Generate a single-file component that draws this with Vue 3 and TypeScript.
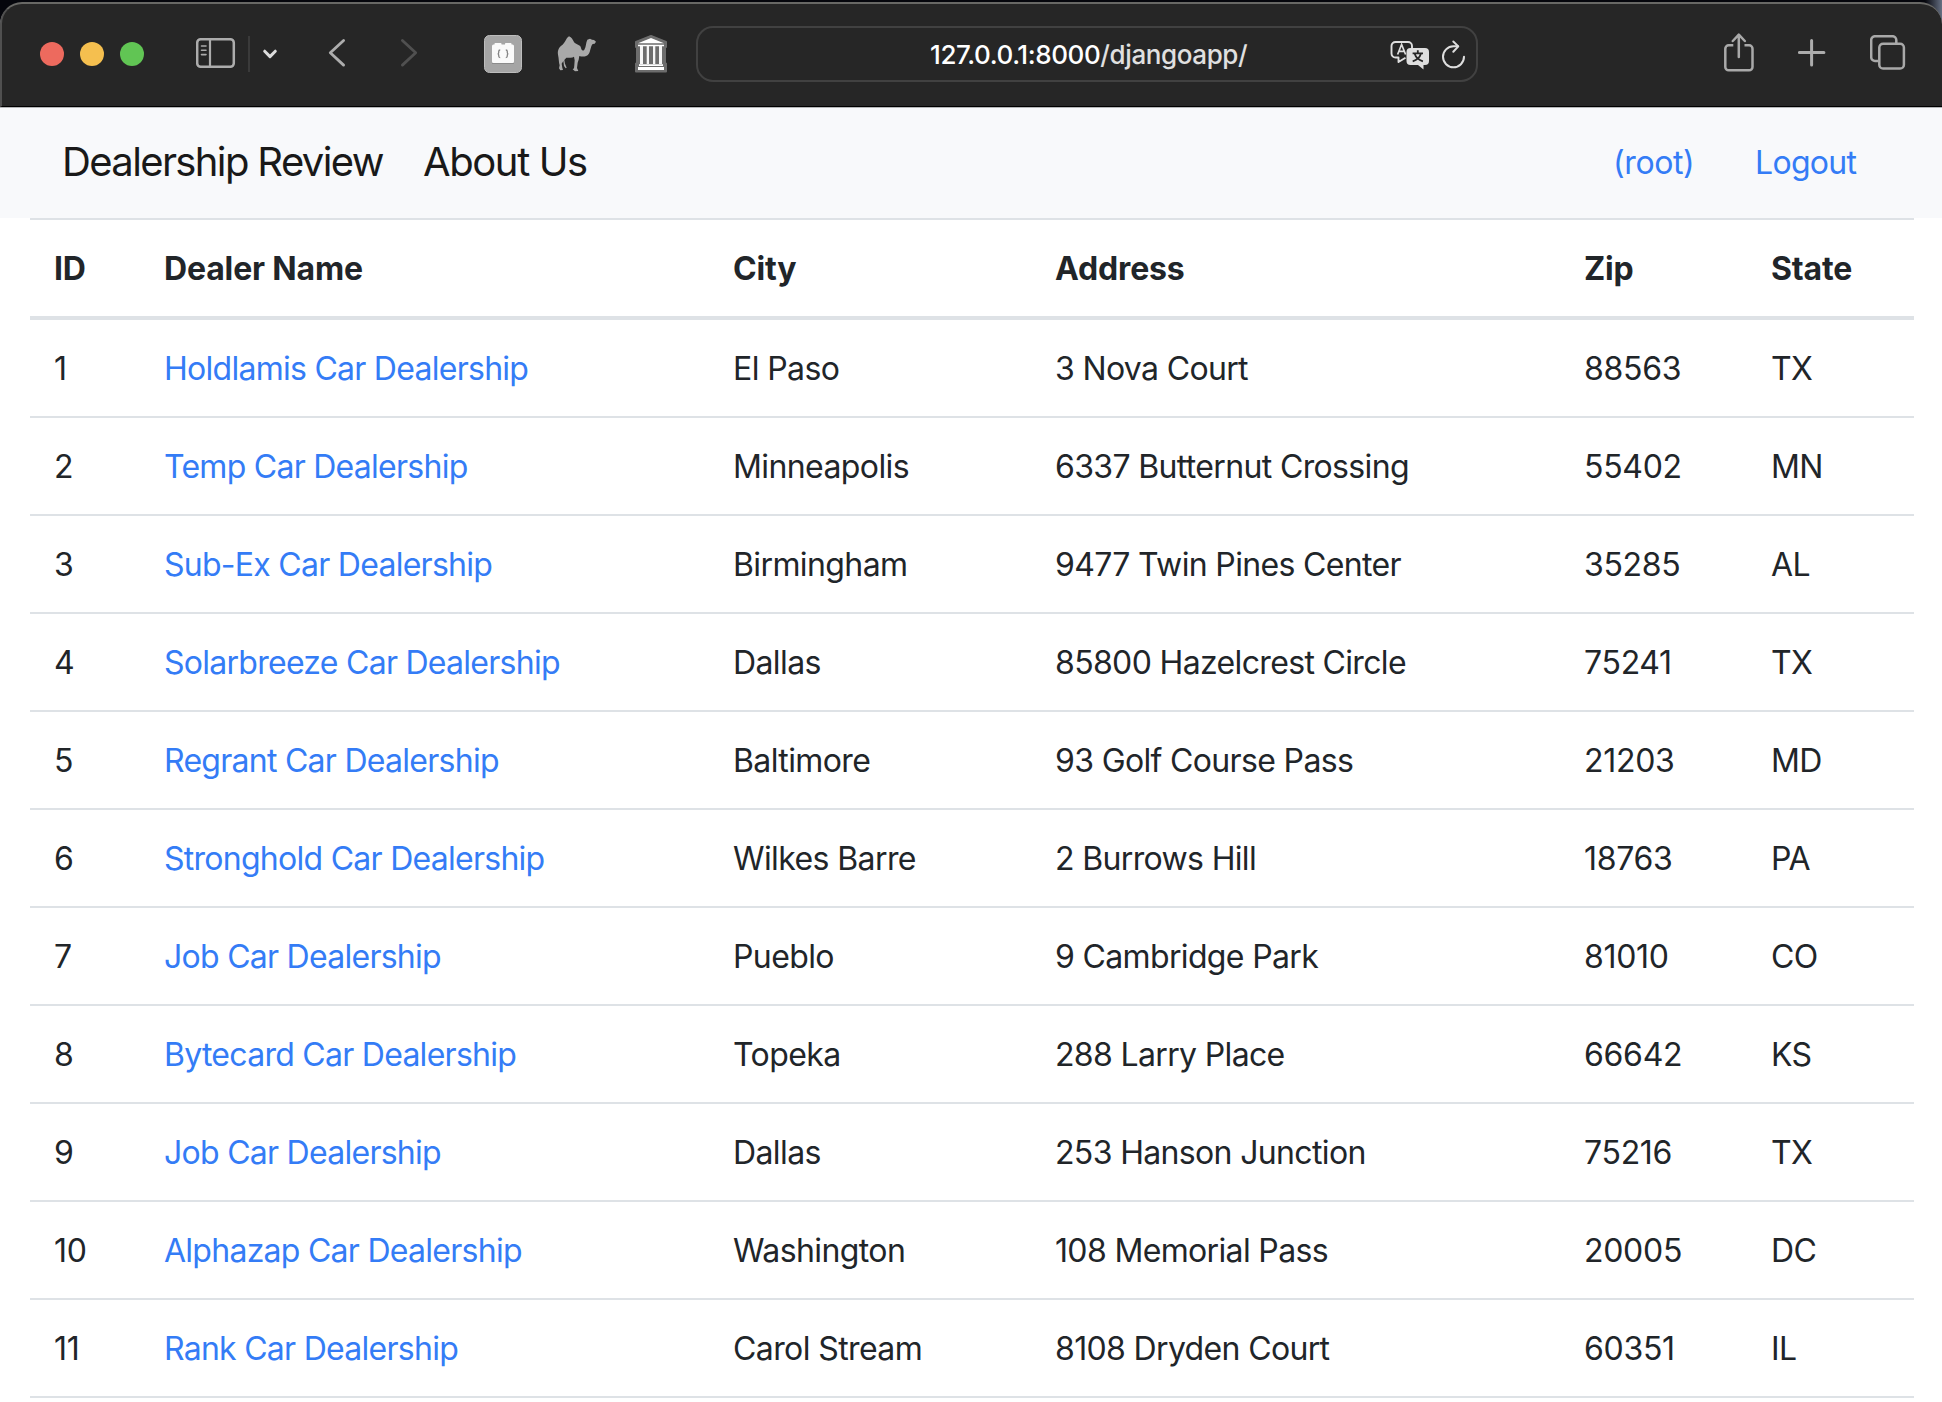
<script setup lang="ts">
interface Dealer {
  id: number
  name: string
  city: string
  address: string
  zip: string
  state: string
}

const headings: string[] = ['ID', 'Dealer Name', 'City', 'Address', 'Zip', 'State']

const dealers: Dealer[] = [
  { id: 1, name: 'Holdlamis Car Dealership', city: 'El Paso', address: '3 Nova Court', zip: '88563', state: 'TX' },
  { id: 2, name: 'Temp Car Dealership', city: 'Minneapolis', address: '6337 Butternut Crossing', zip: '55402', state: 'MN' },
  { id: 3, name: 'Sub-Ex Car Dealership', city: 'Birmingham', address: '9477 Twin Pines Center', zip: '35285', state: 'AL' },
  { id: 4, name: 'Solarbreeze Car Dealership', city: 'Dallas', address: '85800 Hazelcrest Circle', zip: '75241', state: 'TX' },
  { id: 5, name: 'Regrant Car Dealership', city: 'Baltimore', address: '93 Golf Course Pass', zip: '21203', state: 'MD' },
  { id: 6, name: 'Stronghold Car Dealership', city: 'Wilkes Barre', address: '2 Burrows Hill', zip: '18763', state: 'PA' },
  { id: 7, name: 'Job Car Dealership', city: 'Pueblo', address: '9 Cambridge Park', zip: '81010', state: 'CO' },
  { id: 8, name: 'Bytecard Car Dealership', city: 'Topeka', address: '288 Larry Place', zip: '66642', state: 'KS' },
  { id: 9, name: 'Job Car Dealership', city: 'Dallas', address: '253 Hanson Junction', zip: '75216', state: 'TX' },
  { id: 10, name: 'Alphazap Car Dealership', city: 'Washington', address: '108 Memorial Pass', zip: '20005', state: 'DC' },
  { id: 11, name: 'Rank Car Dealership', city: 'Carol Stream', address: '8108 Dryden Court', zip: '60351', state: 'IL' },
]
</script>

<template>
  <div class="screen">
    <header class="toolbar">
      <div class="lights">
        <i class="light red"></i><i class="light yellow"></i><i class="light green"></i>
      </div>

      <svg class="sidebar-icon" width="40" height="32" viewBox="0 0 40 32" fill="none" stroke="#acacac">
        <rect x="1.2" y="2.2" width="36.6" height="27.6" rx="3.5" stroke-width="2.5" />
        <path d="M14 2v28" stroke-width="2.2" />
        <path d="M5.5 9h4.5M5.5 13.3h4.5M5.5 17.6h4.5" stroke-width="1.6" stroke-linecap="round" />
      </svg>
      <span class="divider"></span>
      <svg class="menu-icon" width="16" height="12" viewBox="0 0 16 12" fill="none" stroke="#dcdcdc" stroke-width="3" stroke-linecap="round" stroke-linejoin="round">
        <path d="M2.7 3.2 8 8.6l5.3-5.4" />
      </svg>
      <svg class="back-icon" width="18" height="30" viewBox="0 0 18 30" fill="none" stroke="#adadad" stroke-width="2.8" stroke-linecap="round" stroke-linejoin="round">
        <path d="M15.6 2.5 2.3 14.8l13.3 12.3" />
      </svg>
      <svg class="forward-icon" width="18" height="30" viewBox="0 0 18 30" fill="none" stroke="#505050" stroke-width="2.8" stroke-linecap="round" stroke-linejoin="round">
        <path d="m2.4 2.5 13.3 12.3L2.4 27.1" />
      </svg>

      <svg class="brick-icon" width="38" height="38" viewBox="0 0 38 38">
        <rect x=".5" y=".5" width="37" height="37" rx="5" fill="#a5a5a5" stroke="#bdbdbd" />
        <path d="M8 29h22v-1H8z" fill="#8b8b8b" />
        <path d="M8 11a1.5 1.5 0 0 1 1.500-1.500h1V8.800q0-.8.8-.8h5.400q.8 0 .8.800v.7h3.500v-.7q0-.8.800-.8h4.900q.8 0 .8.800v.7h1a1.500 1.500 0 0 1 1.500 1.500v15.500a1.500 1.500 0 0 1-1.500 1.500h-19a1.500 1.500 0 0 1-1.500-1.500z" fill="#fafafa" />
        <path d="M16.200 15q-1.500 0-1.500 1.500v1q0 1.200-1 1.300 1 .1 1 1.300v1q0 1.500 1.500 1.500M21.800 15q1.500 0 1.500 1.500v1q0 1.200 1 1.300-1 .1-1 1.300v1q0 1.500-1.500 1.500" fill="none" stroke="#858585" stroke-width="1.300" />
      </svg>
      <svg class="camel-icon" width="40" height="38" viewBox="291 75 120 114" fill="#a9a9a9">
        <path d="M327 79C319 84 317 95 307 105C297 111 292 121 294 134C297 146 296 157 299 166L297 175L301 181L309 180L307 173L305 161L310 153L312 168L317 175L320 173L315 161L313 150L319 143C327 142 337 144 342 140L344 151L343 165L342 175L338 178L345 184L355 183L351 174L353 158L356 149L358 138C367 141 380 141 386 132C392 124 391 110 398 102L404 101L408 95L402 90L396 89L390 86L382 89C377 98 379 110 373 119C367 126 364 118 362 110C356 102 346 103 342 96C338 90 335 81 327 79Z" />
      </svg>
      <svg class="museum-icon" width="34" height="38" viewBox="0 0 34 38">
        <path d="M17 1 32 7v5h-1v16.500h1v8H2v-8h1V12H2V7z" fill="#6d6d6d" stroke="#6d6d6d" stroke-width="2" stroke-linejoin="round" />
        <path d="M17 3 30 8.300H4zM4 9.700h26v1.500H4zM4 32h26v3H4zM5 29.200h24v1.700H5z" fill="#fff" />
        <path d="M6 11h3v18H6zM12.700 11h2.300v18h-2.300zM19 11h2.300v18H19zM25 11h3v18h-3z" fill="#f6f6f6" />
      </svg>

      <div class="address-bar">
        <span class="url">127.0.0.1:8000<span class="path">/djangoapp/</span></span>
        <svg class="translate-icon" width="40" height="30" viewBox="0 0 40 30">
          <path d="M15.500 17.800 8.500 22v-4.500H5.500a4 4 0 0 1-4-4v-7.500a4 4 0 0 1 4-4h12.500a4 4 0 0 1 4 4v2" fill="none" stroke="#dedede" stroke-width="1.900" stroke-linejoin="round" />
          <path d="M7.600 14.500 11.600 4.500l4 10M9 11.400h5.200" fill="none" stroke="#dedede" stroke-width="1.700" />
          <path d="M20.500 8h14.500a4 4 0 0 1 4 4v9a4 4 0 0 1-4 4h-1.500v4.500L28 25h-7.500a4 4 0 0 1-4-4v-9a4 4 0 0 1 4-4z" fill="#dedede" />
          <path d="M27.800 10.300v3M22.600 13.300h10.400M31 13.500c-1.200 4-4 6.500-8.300 7.800M24.600 13.500c1.200 4 4 6.500 8.300 7.800" fill="none" stroke="#262626" stroke-width="1.800" />
        </svg>
        <svg class="reload-icon" width="26" height="30" viewBox="0 0 26 30" fill="none" stroke="#dedede" stroke-width="2" stroke-linecap="round" stroke-linejoin="round">
          <path d="M23 16.800a10.500 10.500 0 1 1-10.500-10.500h4.500" />
          <path d="m12.300 1.500 5 4.900-5 5.400" />
        </svg>
      </div>

      <svg class="share-icon" width="30" height="40" viewBox="0 0 30 40" fill="none" stroke="#a9a9a9" stroke-width="2.500" stroke-linecap="round" stroke-linejoin="round">
        <path d="M9.300 12.300H4.700a3.400 3.400 0 0 0-3.400 3.400v18.200a3.400 3.400 0 0 0 3.400 3.400h20.400a3.400 3.400 0 0 0 3.400-3.400V15.700a3.400 3.400 0 0 0-3.400-3.400h-4.600" stroke-linecap="butt" />
        <path d="M14.800 24V2M8.800 8l6-6.300 6 6.300" />
      </svg>
      <svg class="plus-icon" width="28" height="28" viewBox="0 0 28 28" stroke="#acacac" stroke-width="3" stroke-linecap="round">
        <path d="M13.600 1.500v24.500M1.400 13.600h24.500" />
      </svg>
      <svg class="tabs-icon" width="36" height="36" viewBox="0 0 36 36" fill="none" stroke="#a9a9a9" stroke-width="2.500">
        <path d="M8.500 26H5a3.800 3.800 0 0 1-3.800-3.800V5A3.800 3.800 0 0 1 5 1.200h17.500A3.800 3.800 0 0 1 26.300 5v3.500" />
        <rect x="9.300" y="8.800" width="24.600" height="24.800" rx="3.800" />
      </svg>
    </header>

    <nav class="navbar">
      <a class="brand">Dealership Review</a>
      <a class="about">About Us</a>
      <a class="link user">(root)</a>
      <a class="link logout">Logout</a>
    </nav>

    <main class="content">
      <table>
        <colgroup>
          <col class="c-id" /><col class="c-name" /><col class="c-city" />
          <col class="c-address" /><col class="c-zip" /><col class="c-state" />
        </colgroup>
        <thead>
          <tr><th v-for="h in headings" :key="h">{{ h }}</th></tr>
        </thead>
        <tbody>
          <tr v-for="d in dealers" :key="d.id">
            <td class="num">{{ d.id }}</td>
            <td class="name"><a>{{ d.name }}</a></td>
            <td>{{ d.city }}</td>
            <td class="street">{{ d.address }}</td>
            <td class="num">{{ d.zip }}</td>
            <td>{{ d.state }}</td>
          </tr>
        </tbody>
      </table>
    </main>
  </div>
</template>

<style>
body {
  margin: 0;
  background: #fff;
  overflow: hidden;
}
</style>

<style scoped>
.screen {
  box-sizing: border-box;
  width: 1942px;
  height: 1402px;
  padding-top: 2px;
  overflow: hidden;
  background: linear-gradient(90deg, #05060c 0 1925px, #667083 1942px) top / 100% 40px no-repeat #fff;
  color: #212529;
  font-family: Inter, "Liberation Sans", sans-serif;
  font-size: 32px;
  line-height: 48px;
}

.toolbar {
  box-sizing: border-box;
  display: flex;
  align-items: flex-start;
  height: 105px;
  border-top: 2px solid #686865;
  border-left: 2px solid #505050;
  border-bottom: 1px solid #000;
  border-radius: 22px 22px 0 0;
  background: #262626;
  box-shadow: 0 1px 0 #b5b6b8;
  position: relative;
}
.toolbar > * { flex: none; }
.lights { display: flex; gap: 16px; margin: 38px 0 0 38px; }
.light { width: 24px; height: 24px; border-radius: 50%; }
.red { background: #ed6a5e; }
.yellow { background: #f5bf4f; }
.green { background: #61c554; }
.sidebar-icon { margin: 33px 0 0 52px; }
.divider { width: 2px; height: 36px; margin: 32px 0 0 12px; background: #3a3a3a; }
.menu-icon { margin: 44px 0 0 12px; }
.back-icon { margin: 34px 0 0 50px; }
.forward-icon { margin: 34px 0 0 54px; }
.brick-icon { margin: 31px 0 0 66px; }
.camel-icon { margin: 31px 0 0 35px; }
.museum-icon { margin: 31px 0 0 37px; }
.address-bar {
  box-sizing: border-box;
  display: flex;
  width: 782px;
  height: 56px;
  margin: 22px 0 0 28px;
  border: 2px solid #414141;
  border-radius: 17px;
}
.url {
  width: 318px;
  margin-left: 232px;
  color: #fff;
  font-size: 26px;
  font-weight: 500;
  line-height: 54px;
  letter-spacing: -0.4px;
  white-space: nowrap;
}
.path { color: #e0e0e0; }
.translate-icon { margin: 12px 0 0 142px; }
.reload-icon { margin: 12px 0 0 11px; }
.share-icon { margin: 29px 0 0 246px; }
.plus-icon { margin: 35px 0 0 44px; }
.tabs-icon { margin: 31px 0 0 44px; }

.navbar {
  box-sizing: border-box;
  display: flex;
  height: 110px;
  margin-top: 1px;
  padding-top: 24px;
  background: #f8f9fb;
  white-space: nowrap;
}
.brand, .about {
  color: #191919;
  font-size: 40px;
  line-height: 60px;
  letter-spacing: -1.4px;
}
.brand {
  width: 361px;
  padding-left: 62px;
  letter-spacing: -1.63px;
}
.link {
  padding-top: 1px;
  color: #347cf6;
  line-height: 60px;
  letter-spacing: -0.7px;
}
.user {
  width: 142px;
  margin-left: auto;
  letter-spacing: -0.4px;
}
.logout { width: 187px; }

.content { padding: 0 28px 0 30px; }
table {
  width: 1884px;
  table-layout: fixed;
  border-collapse: separate;
  border-spacing: 0;
}
.c-id { width: 110px; }
.c-name { width: 569px; }
.c-city { width: 322px; }
.c-address { width: 529px; }
.c-zip { width: 187px; }
.c-state { width: 167px; }
th, td {
  padding: 25px 24px 23px;
  text-align: left;
  white-space: nowrap;
  letter-spacing: -0.6px;
}
th {
  border-top: 2px solid #dee2e6;
  border-bottom: 4px solid #dee2e6;
  font-weight: 700;
  letter-spacing: -0.15px;
}
td { border-bottom: 2px solid #dee2e6; }
.name {
  color: #347cf6;
  letter-spacing: -0.73px;
}
.street { letter-spacing: -0.65px; }
.num { letter-spacing: -0.3px; }
</style>
